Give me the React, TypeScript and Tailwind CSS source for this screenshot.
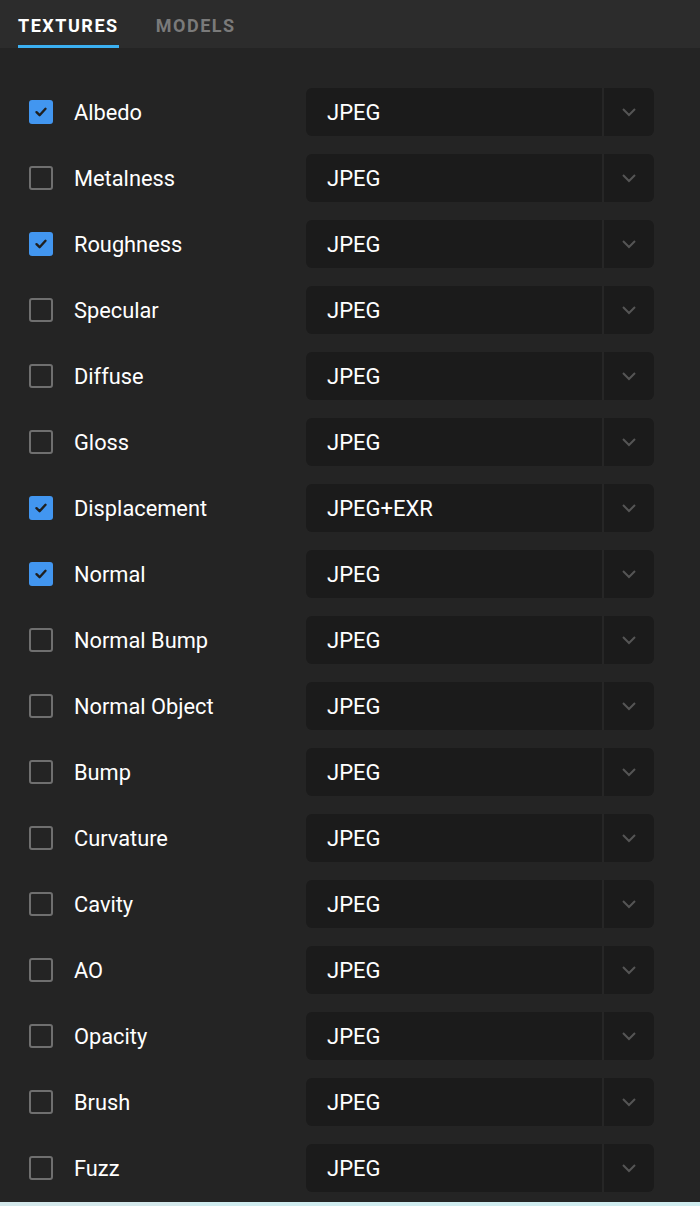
import React from "react";

const rows: { name: string; checked: boolean; fmt: string }[] = [
  { name: "Albedo", checked: true, fmt: "JPEG" },
  { name: "Metalness", checked: false, fmt: "JPEG" },
  { name: "Roughness", checked: true, fmt: "JPEG" },
  { name: "Specular", checked: false, fmt: "JPEG" },
  { name: "Diffuse", checked: false, fmt: "JPEG" },
  { name: "Gloss", checked: false, fmt: "JPEG" },
  { name: "Displacement", checked: true, fmt: "JPEG+EXR" },
  { name: "Normal", checked: true, fmt: "JPEG" },
  { name: "Normal Bump", checked: false, fmt: "JPEG" },
  { name: "Normal Object", checked: false, fmt: "JPEG" },
  { name: "Bump", checked: false, fmt: "JPEG" },
  { name: "Curvature", checked: false, fmt: "JPEG" },
  { name: "Cavity", checked: false, fmt: "JPEG" },
  { name: "AO", checked: false, fmt: "JPEG" },
  { name: "Opacity", checked: false, fmt: "JPEG" },
  { name: "Brush", checked: false, fmt: "JPEG" },
  { name: "Fuzz", checked: false, fmt: "JPEG" },
];

function Checkbox({ checked }: { checked: boolean }) {
  if (checked) {
    return (
      <div className="w-[24px] h-[24px] rounded-[3px] bg-[#4296f0] flex items-center justify-center shrink-0">
        <svg width="14" height="14" viewBox="0 0 14 14" fill="none">
          <path d="M2.5 7.2 L5.6 10.2 L11.5 3.8" stroke="#1f1f1f" strokeWidth="2.4" strokeLinecap="round" strokeLinejoin="round" />
        </svg>
      </div>
    );
  }
  return <div className="w-[24px] h-[24px] rounded-[3px] border-[2.5px] border-[#6f6f6f] shrink-0" />;
}

export default function App() {
  return (
    <div className="w-[700px] h-[1206px] bg-[#242424] flex flex-col overflow-hidden" style={{ fontFamily: "Roboto, 'Liberation Sans', sans-serif" }}>
      <div className="h-[48px] bg-[#2c2c2c] flex items-end pl-[18px] gap-[37px] shrink-0">
        <div className="flex flex-col items-stretch">
          <span className="text-[18px] font-bold tracking-[0.085em] text-white leading-none pb-[10px]">TEXTURES</span>
          <div className="h-[3px] bg-[#3bb0f2]" />
        </div>
        <div className="flex flex-col">
          <span className="text-[18px] font-bold tracking-[0.085em] text-[#7a7a7a] leading-none pb-[13px]">MODELS</span>
        </div>
      </div>
      <div className="flex-1 flex flex-col pt-[31px]">
        {rows.map((r) => (
          <div key={r.name} className="h-[66px] flex items-center shrink-0">
            <div className="w-[306px] flex items-center pl-[29px] gap-[21px]">
              <Checkbox checked={r.checked} />
              <span className="text-[21.8px] font-normal text-white pt-[3px]">{r.name}</span>
            </div>
            <div className="w-[348px] h-[48px] rounded-[6px] bg-[#1b1b1b] flex items-center">
              <div className="flex-1 pl-[21px] text-[22px] text-white pt-[1px]">{r.fmt}</div>
              <div className="w-[52px] h-full border-l-[2px] border-[#262626] flex items-center justify-center">
                <svg width="16" height="10" viewBox="0 0 16 10" fill="none">
                  <path d="M2 2 L8 8 L14 2" stroke="#555555" strokeWidth="2" />
                </svg>
              </div>
            </div>
          </div>
        ))}
      </div>
      <div className="h-[4px] flex shrink-0">
        <div className="w-[190px] bg-[#d3e8eb]" />
        <div className="flex-1 bg-[#cfecef]" />
      </div>
    </div>
  );
}
